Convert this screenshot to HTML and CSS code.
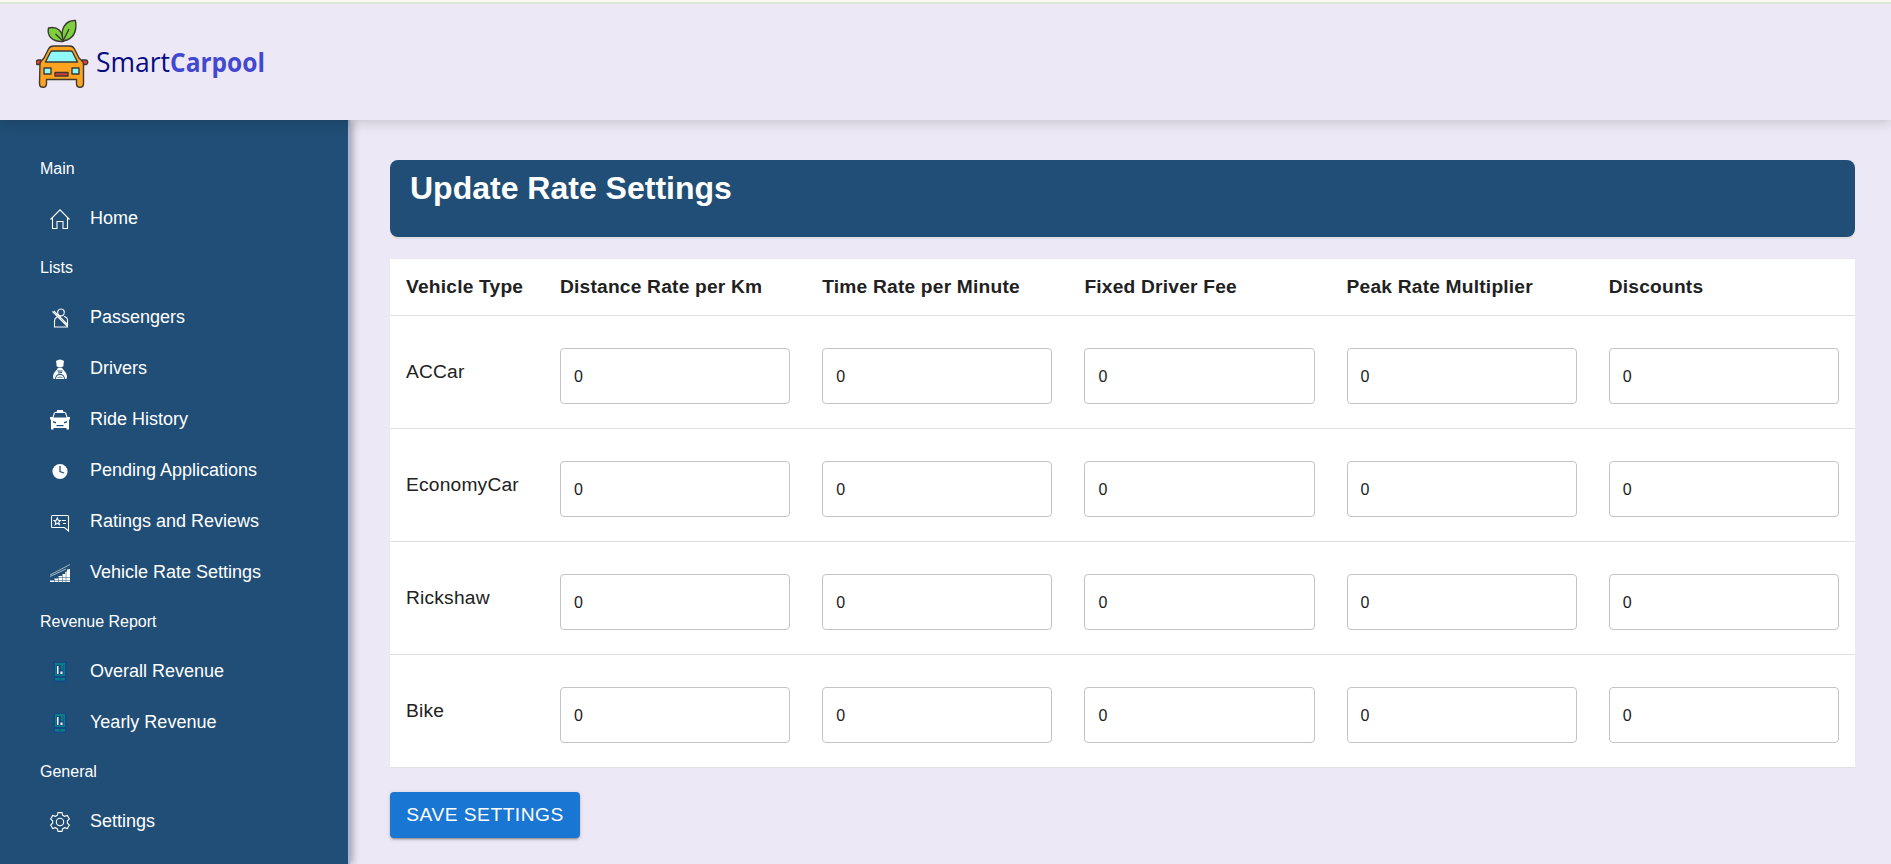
FILE: index.html
```html
<!DOCTYPE html>
<html lang="en">
<head>
<meta charset="utf-8">
<title>SmartCarpool</title>
<link rel="stylesheet" href="styles.css">
</head>
<body>
<header class="topbar">
  <svg class="logo" width="240" height="84" viewBox="0 0 240 84">
    <g stroke="#3b3a36" stroke-width="1.4" stroke-linejoin="round">
      <path fill="#7ed03c" d="M27 37.500C15 38 11 31 12.500 24C21.500 22 27 27 27 37.500Z"/>
      <path fill="#7ed03c" d="M27.500 37C23.500 26 29 16 39.500 16.500C41 27 37.500 35 27.500 37Z"/>
      <path fill="none" d="M19.500 30L27 37L33 25"/>
      <path fill="#f03a3a" d="M5.500 56H2.500C0 56-.500 59 1 60.500H4.500M45.500 56H49.500C52 56 52.500 59 50.500 60.500H46.500"/>
      <path fill="#ffa21f" d="M4 60C4 57 6.500 56 8 54L12.500 45Q14 42 17.500 42H33.500Q37 42 38.500 45L43 54C44.500 56 47.500 57 47.500 60V79.500Q47.500 83.300 44 83.300Q40.500 83.300 40.500 79.500V75.500H10.500V79.500Q10.500 83.300 7 83.300Q3.500 83.300 3.500 79.500Z"/>
      <path fill="#8ff8fc" d="M9.500 58L14.500 48Q15 47 16.500 47H34.500Q36 47 36.500 48L41.500 58Z"/>
      <path fill="#8ff8fc" d="M8 64H15V70H8ZM36 64H43V70H36Z"/>
      <path fill="#d83a35" d="M19 68.500H32V72H19Z"/>
    </g>
    <text class="logo-light" x="60" y="68" textLength="74" lengthAdjust="spacingAndGlyphs">Smart</text>
    <text class="logo-bold" x="134" y="68" textLength="95" lengthAdjust="spacingAndGlyphs">Carpool</text>
  </svg>
</header>
<div class="layout">
  <nav class="sidebar">
    <h3 class="section">Main</h3>
    <a class="item"><svg class="icon" viewBox="0 0 20 20"><path class="line" d="M.5 10.500L10 .8L19.500 10.500M2.500 9V19.500H7V12.500H13V19.500H17.500V9"/></svg>Home</a>
    <h3 class="section">Lists</h3>
    <a class="item"><svg class="icon" viewBox="0 0 20 20"><path class="line" d="M8 6C7 3 8.500 1 11 1S15 3 14 6C13 8.500 9 8.500 8 6M7 9C5 10 4.500 11 4.500 13V19H17.500V12C17.500 10 16 9 14 8.500M2.500 3.500L17.500 18.500M3.800 2.800L18 17"/></svg>Passengers</a>
    <a class="item"><svg class="icon" viewBox="0 0 20 20"><path class="fill" d="M6 2Q10-1 14 2L13.500 5V7Q10 10 6.500 7V5ZM8 9H12L16 14Q17.500 17 16.500 20H15Q14.500 15 10 15T5 20H3.500Q2.500 17 4 14Z"/><path class="line" d="M6.500 19.500Q7 16.500 10 16.500T13.500 19.500ZM8 18H12"/><path d="M7.500 12H12.500M8 14L12 13.500" stroke="#204e76"/></svg>Drivers</a>
    <a class="item"><svg class="icon" viewBox="0 0 20 20"><path class="fill" fill-rule="evenodd" d="M7 0H13V1.500L16 2.500L17.500 7L20 7V9L19 10V19.500H16.500V18H3.500V19.500H1V10L0 9V7L2.500 7L4 2.500L7 1.500ZM5 3L3.500 7.500H16.500L15 3ZM3 11V12.500L6 13.500V12ZM17 11L14 12V13.500L17 12.500ZM6.500 15V16.200H13.500V15Z"/></svg>Ride History</a>
    <a class="item"><svg class="icon" viewBox="0 0 20 20"><circle class="fill" cx="10" cy="10.500" r="7.600"/><path d="M10 5V10.500L14 12" fill="none" stroke="#204e76" stroke-width="1.300"/></svg>Pending Applications</a>
    <a class="item"><svg class="icon" viewBox="0 0 20 20"><path class="line" d="M1.500 4.500Q1.500 3.500 2.500 3.500H17.500Q18.500 3.500 18.500 4.500V19L14.500 15.500H2.500Q1.500 15.500 1.500 14.500ZM7.300 6L8.300 8.300L10.500 8.500L8.800 10.200L9.400 12.500L7.300 11.300L5.200 12.500L5.800 10.200L4 8.500L6.300 8.300ZM12 8.500H16M13 11.500H16"/></svg>Ratings and Reviews</a>
    <a class="item"><svg class="icon" viewBox="0 0 20 20"><path class="thin" d="M0 12L20 1.500M0 13.500L16 6"/><path class="fill" d="M0 17H4V15.500H8V13H12V11H15V9L17 8.500V6.500L20 6V19H0Z"/><path d="M4.500 15V19M8.500 13V19M12.500 11V19M16 9V19M0 17.500H20M8 14.500H20" stroke="#204e76" stroke-width=".5"/></svg>Vehicle Rate Settings</a>
    <h3 class="section">Revenue Report</h3>
    <a class="item"><svg class="icon" viewBox="0 0 20 20"><rect x="3.500" width="13" height="20" rx="1" fill="#154986"/><path d="M5 1H15V14H5ZM5 16H15V18.500H5Z" fill="#087d83"/><path d="M6.500 3H13.500V12.500H6.500Z" fill="#184981"/><path d="M11 3H12.800V8H11Z" fill="#087d83"/><path class="fill" d="M7 4H8.500V12H7ZM10.500 9.500H12.500V12H10.500Z"/><path d="M9 17H11" stroke="#154986"/></svg>Overall Revenue</a>
    <a class="item"><svg class="icon" viewBox="0 0 20 20"><rect x="3.500" width="13" height="20" rx="1" fill="#154986"/><path d="M5 1H15V14H5ZM5 16H15V18.500H5Z" fill="#087d83"/><path d="M6.500 3H13.500V12.500H6.500Z" fill="#184981"/><path d="M11 3H12.800V8H11Z" fill="#087d83"/><path class="fill" d="M7 4H8.500V12H7ZM10.500 9.500H12.500V12H10.500Z"/><path d="M9 17H11" stroke="#154986"/></svg>Yearly Revenue</a>
    <h3 class="section">General</h3>
    <a class="item"><svg class="icon" viewBox="0 0 20 20"><circle class="line" cx="10" cy="10" r="3.700"/><path class="line" d="M8 .6H12L12.600 3.200L14.500 4.300L17.300 3.500L19.300 7L17.300 9V11L19.300 13L17.300 16.500L14.500 15.700L12.600 16.800L12 19.400H8L7.400 16.800L5.500 15.700L2.700 16.500L.7 13L2.700 11V9L.7 7L2.700 3.500L5.500 4.300L7.400 3.200Z"/></svg>Settings</a>
  </nav>
  <main class="content">
    <h1 class="title">Update Rate Settings</h1>
    <table class="rates">
      <thead>
        <tr><th class="type">Vehicle Type</th><th>Distance Rate per Km</th><th>Time Rate per Minute</th><th>Fixed Driver Fee</th><th>Peak Rate Multiplier</th><th>Discounts</th></tr>
      </thead>
      <tbody>
        <tr><td>ACCar</td><td><input class="field" value="0"></td><td><input class="field" value="0"></td><td><input class="field" value="0"></td><td><input class="field" value="0"></td><td><input class="field" value="0"></td></tr>
        <tr><td>EconomyCar</td><td><input class="field" value="0"></td><td><input class="field" value="0"></td><td><input class="field" value="0"></td><td><input class="field" value="0"></td><td><input class="field" value="0"></td></tr>
        <tr><td>Rickshaw</td><td><input class="field" value="0"></td><td><input class="field" value="0"></td><td><input class="field" value="0"></td><td><input class="field" value="0"></td><td><input class="field" value="0"></td></tr>
        <tr><td>Bike</td><td><input class="field" value="0"></td><td><input class="field" value="0"></td><td><input class="field" value="0"></td><td><input class="field" value="0"></td><td><input class="field" value="0"></td></tr>
      </tbody>
    </table>
    <button class="save">SAVE SETTINGS</button>
  </main>
</div>
</body>
</html>
```

FILE: styles.css
```css
* { box-sizing: border-box; }
body {
  margin: 0;
  height: 864px;
  overflow: hidden;
  display: flex;
  flex-direction: column;
  background: #ece8f5;
  font-family: "Liberation Sans", Arial, sans-serif;
}
.topbar {
  position: relative;
  z-index: 1;
  height: 120px;
  flex: none;
  padding-left: 36px;
  border-top: 2px solid #f8faee;
  background: #ece8f5;
  box-shadow: inset 0 2px #dce5d8, 0 2px 12px rgba(0, 0, 0, .18);
}
.logo { display: block; margin-top: 2px; }
.logo-light, .logo-bold { font-family: "Open Sans", "Noto Sans", sans-serif; font-size: 27px; }
.logo-light { fill: #070b84; }
.logo-bold { fill: #4248d0; font-weight: 700; }
.layout { flex: 1; display: flex; min-height: 0; }
.sidebar {
  width: 350px;
  flex: none;
  padding-top: 25px;
  border-right: 2px solid #a9b4d2;
  background: #204e76;
  color: #fff;
  box-shadow: 2px 0 8px rgba(0, 0, 0, .35);
}
.section { margin: 0; padding-left: 40px; font-size: 16px; font-weight: 400; line-height: 48px; }
.item { display: flex; align-items: center; gap: 20px; height: 51px; padding-left: 50px; font-size: 18px; }
.icon { width: 20px; height: 20px; flex: none; margin-top: 1px; }
.fill { fill: #fff; }
.line { fill: none; stroke: #fff; stroke-width: 1.1; }
.thin { fill: none; stroke: #fff; stroke-width: .6; }
.content { flex: 1; padding: 40px 36px 0 40px; }
.title {
  margin: 0 0 22px;
  height: 77px;
  padding: 10px 20px;
  border-radius: 8px;
  background: #204e76;
  color: #fff;
  font-size: 32px;
  line-height: 36px;
  box-shadow: 0 2px #dedee0;
}
.rates { width: 100%; table-layout: fixed; border-collapse: separate; border-spacing: 0; background: #fff; color: #212121; }
.rates th, .rates td { padding: 16px; border-bottom: 1px solid #e0e0e0; font-size: 19.2px; letter-spacing: .2px; text-align: left; }
.rates th { height: 57px; line-height: 24px; }
.rates td { height: 113px; padding-top: 15px; padding-bottom: 17px; line-height: 27px; }
.rates .type { width: 154px; }
.field {
  display: block;
  width: 100%;
  height: 56px;
  margin: 17px 0 7px;
  padding: 2px 13px 0;
  border: 1px solid #c4c4c4;
  border-radius: 4px;
  background: #fff;
  color: #212121;
  font: 16px "Liberation Sans", Arial, sans-serif;
}
.save {
  display: block;
  width: 190px;
  height: 46px;
  margin-top: 24px;
  padding: 0 0 1px;
  border: 0;
  border-radius: 4px;
  background: #1976d2;
  color: #fff;
  font: 19.2px "Liberation Sans", Arial, sans-serif;
  letter-spacing: .5px;
  box-shadow: 0 3px 1px -2px rgba(0,0,0,.2), 0 2px 2px rgba(0,0,0,.14), 0 1px 5px rgba(0,0,0,.12);
}
```
